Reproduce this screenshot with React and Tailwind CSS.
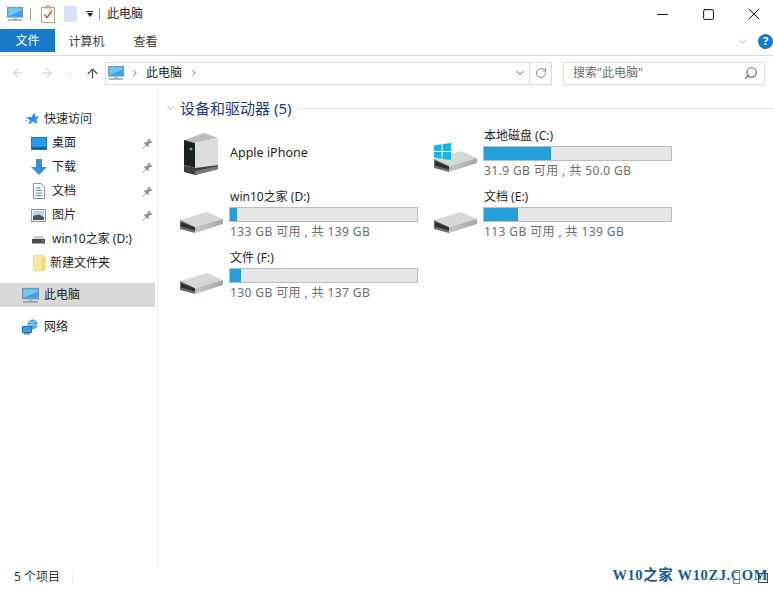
import { ArrowLeft, ArrowRight, ArrowUp, ChevronDown, ChevronRight, RotateCw, Search, Minus, Square, X } from "lucide-react";

const uiFont = { fontFamily: '"Noto Sans", "Noto Sans CJK SC", sans-serif' };

function PcIcon({ size = 18 }) {
  return (
    <svg width={size} height={size} viewBox="0 0 18 18">
      <rect x="0.5" y="1.5" width="17" height="11" fill="#3fa9ea" stroke="#7a8fa0" />
      <rect x="1.5" y="2.5" width="15" height="9" fill="#6cc8f5" />
      <path d="M1.5 11.5 L16.5 11.5 L16.5 5 Z" fill="#3d9fe0" />
      <rect x="7" y="13" width="4" height="2" fill="#b0b8be" />
      <rect x="1" y="15" width="16" height="1.5" fill="#8d979f" />
    </svg>
  );
}

function PinIcon() {
  return (
    <svg width="11" height="11" viewBox="0 0 11 11">
      <path d="M6.5 0.5 L10.5 4.5 L9.2 5.2 L8.4 4.8 L6.4 7 L6.4 9 L5.6 9.2 L1.8 5.4 L2.2 4.6 L4.2 4.6 L6.2 2.6 L5.8 1.6 Z" fill="#8f979e" />
      <path d="M3.4 7.6 L0.6 10.4" stroke="#8f979e" strokeWidth="1" />
    </svg>
  );
}

function DriveIcon() {
  return (
    <svg width="43" height="21" viewBox="0 0 43 21">
      <defs>
        <linearGradient id="driveSide" x1="0" y1="0" x2="1" y2="0">
          <stop offset="0" stopColor="#c8c9ca" />
          <stop offset="1" stopColor="#a4a6a7" />
        </linearGradient>
      </defs>
      <path d="M0 8 L27 0 L43 7 L15 15 Z" fill="#d6d7d8" />
      <path d="M15 15 L43 7 L43 12 L15 21 Z" fill="url(#driveSide)" />
      <path d="M0 8 L15 15 L15 21 L0 17 Z" fill="#6a6e6f" />
      <path d="M1 10 L15 15.5 L15 18.5 L1 14.5 Z" fill="#2c2f30" />
      <rect x="15.5" y="16.5" width="2" height="1.5" fill="#5fd06a" />
    </svg>
  );
}

function WinLogo() {
  return (
    <svg width="17" height="17" viewBox="0 0 17 17" className="absolute left-0 top-[13px]">
      <path d="M0 2.4 L7.6 1.2 L7.6 8 L0 8 Z M8.6 1 L17 0 L17 8 L8.6 8 Z M0 9 L7.6 9 L7.6 15.8 L0 14.6 Z M8.6 9 L17 9 L17 17 L8.6 16 Z" fill="#12b5e8" />
    </svg>
  );
}

function ServerIcon() {
  return (
    <svg width="34" height="42" viewBox="0 0 34 42">
      <path d="M0 7 L20 0 L34 5 L11 10 Z" fill="#bcbdbf" />
      <path d="M11 10 L34 5 L34 32 L11 35 Z" fill="#dcdcdd" />
      <path d="M0 7 L11 10 L11 35 L0 32 Z" fill="#1d2022" />
      <path d="M0 32 L11 35 L34 32 L34 36 L11 42 L0 39 Z" fill="#3d4042" />
      <path d="M11 38 L34 33 L34 36 L11 42 Z" fill="#77797b" />
      <circle cx="7" cy="16" r="1.5" fill="#45c95a" />
    </svg>
  );
}

function DesktopIcon() {
  return (
    <svg width="16" height="13" viewBox="0 0 16 13">
      <rect x="0.5" y="0.5" width="15" height="12" fill="#2a9be8" stroke="#1c78bd" />
      <rect x="1" y="10" width="14" height="2" fill="#155f96" />
    </svg>
  );
}

function DownloadIcon() {
  return (
    <svg width="16" height="16" viewBox="0 0 16 16">
      <path d="M5 0 H11 V8 H16 L8 16 L0 8 H5 Z" fill="#3c8ee0" />
    </svg>
  );
}

function DocIcon() {
  return (
    <svg width="12" height="16" viewBox="0 0 12 16">
      <path d="M0.5 0.5 H8 L11.5 4 V15.5 H0.5 Z" fill="#fff" stroke="#8c949b" />
      <path d="M3 5 H7 M3 7.5 H9 M3 10 H9 M3 12.5 H9" stroke="#4d8ec4" strokeWidth="1" />
    </svg>
  );
}

function PictureIcon() {
  return (
    <svg width="15" height="13" viewBox="0 0 15 13">
      <rect x="0.5" y="0.5" width="14" height="12" fill="#eef1f3" stroke="#8c949b" />
      <rect x="2" y="2" width="11" height="5" fill="#b5d5ea" />
      <path d="M2 7 L8 5.5 L13 8 L13 11 L2 11 Z" fill="#47575f" />
    </svg>
  );
}

function SmallDriveIcon() {
  return (
    <svg width="15" height="9" viewBox="0 0 15 9">
      <path d="M1 4 L4 1 L12 1 L14 4 Z" fill="#d0d1d2" />
      <rect x="1" y="4" width="13" height="4.5" fill="#4a4d4f" />
      <rect x="11" y="5.5" width="1.5" height="1" fill="#6bd873" />
    </svg>
  );
}

function FolderIcon() {
  return (
    <svg width="13" height="16" viewBox="0 0 13 16">
      <path d="M0.5 1.5 Q0.5 0.5 1.5 0.5 H9 L9 15.5 H1.5 Q0.5 15.5 0.5 14.5 Z" fill="#ffe9a0" stroke="#efd58a" />
      <rect x="9" y="1.5" width="3.5" height="14" fill="#f6d677" />
    </svg>
  );
}

function StarIcon() {
  return (
    <svg width="15" height="14" viewBox="0 0 15 14">
      <path d="M9 0.5 L10.5 4.5 L14.5 4.8 L11.4 7.5 L12.4 12 L8 9.6 L3.6 13 L4.8 8.2 L1.5 5.2 L6.5 5 Z" fill="#2f8fe0" />
      <path d="M0 6 H3 M0 8.5 H2" stroke="#7fbdf0" strokeWidth="1" />
    </svg>
  );
}

function NetworkIcon() {
  return (
    <svg width="17" height="16" viewBox="0 0 17 16">
      <circle cx="10.5" cy="5.5" r="5" fill="#4aa3e0" />
      <path d="M7 3 Q10 5 13 2 M6 6 H15" stroke="#bfe4f8" strokeWidth="1" fill="none" />
      <rect x="0.5" y="7.5" width="9" height="6" fill="#3aa0e6" stroke="#1c78bd" />
      <rect x="2" y="14" width="6" height="1.5" fill="#7c8a94" />
    </svg>
  );
}

function TaskIcon() {
  return (
    <svg width="14" height="18" viewBox="0 0 14 18">
      <path d="M0.5 2.5 H13.5 V17.5 H0.5 Z" fill="#fff" stroke="#b5a48a" />
      <rect x="4" y="0.5" width="6" height="3" fill="#c9b28c" />
      <path d="M3.5 9.5 L6 12.5 L11 5.5" fill="none" stroke="#d9552c" strokeWidth="1.4" />
    </svg>
  );
}

function NavRow({ icon, label, pinned, indent = "pl-[31px]", active }) {
  return (
    <div className={`flex h-6 items-center ${indent} ${active ? "bg-[#d9d9d9]" : ""}`}>
      <span className="flex shrink-0 items-center">{icon}</span>
      <span className="flex-1 whitespace-nowrap text-[12px] text-[#1f1f1f]">{label}</span>
      {pinned && (
        <span className="mr-[2px] flex w-[11px]">
          <PinIcon />
        </span>
      )}
    </div>
  );
}

function DriveTile({ name, percent, info, logo }) {
  return (
    <div className="flex items-center">
      <div className="relative flex h-[48px] w-[49px] shrink-0 items-end pb-[6px]">
        <DriveIcon />
        {logo && <WinLogo />}
      </div>
      <div className="w-[189px]">
        <div className="h-[17px] -translate-y-px pl-px text-[12px] leading-[17px] text-[#1f1f1f]">{name}</div>
        <div className="mt-[1px] h-[15px] border border-[#bcbcbc] bg-[#e6e6e6]">
          <div className="h-full bg-[#26a0da]" style={{ width: `${percent}%` }} />
        </div>
        <div className="mt-[1px] h-[17px] pl-px text-[12px] leading-[17px] tracking-[0.4px] text-[#6d6d6d]">{info}</div>
      </div>
    </div>
  );
}

export default function App() {
  return (
    <div className="relative flex h-[589px] w-[773px] flex-col overflow-hidden bg-white" style={uiFont}>
      {/* title bar */}
      <div className="flex h-[28px] items-center">
        <div className="ml-[7px] flex items-center">
          <PcIcon size={16} />
          <span className="ml-[7px] h-[12px] w-px bg-[#9a9a9a]" />
          <span className="ml-[10px] flex"><TaskIcon /></span>
          <span className="ml-[9px] h-[16px] w-[13px] bg-[#d9e3f3]" />
          <span className="ml-[9px] flex flex-col items-center">
            <span className="mb-[1px] h-px w-[7px] bg-[#222]" />
            <span className="h-0 w-0 border-x-[3.5px] border-t-[4px] border-x-transparent border-t-[#222]" />
          </span>
          <span className="ml-[6px] h-[12px] w-px bg-[#9a9a9a]" />
          <span className="ml-[7px] text-[12px] text-[#1f1f1f]">此电脑</span>
        </div>
        <div className="-mr-1 ml-auto flex items-center text-[#111]">
          <span className="flex w-[46px] justify-center"><Minus size={17} strokeWidth={1} absoluteStrokeWidth /></span>
          <span className="flex w-[46px] justify-center"><Square size={13} strokeWidth={1} absoluteStrokeWidth /></span>
          <span className="flex w-[46px] justify-center"><X size={20} strokeWidth={1} absoluteStrokeWidth /></span>
        </div>
      </div>

      {/* ribbon tabs */}
      <div className="flex h-[28px] border-b border-[#dadada] pb-[3px] pt-px">
        <div className="flex w-[55px] items-center justify-center bg-[#1979ca] pt-px text-[12px] text-white">文件</div>
        <div className="flex w-[63px] items-center justify-center pt-[2px] text-[12px] text-[#3c3c3c]">计算机</div>
        <div className="flex w-[54px] items-center justify-center pl-[1px] pt-[2px] text-[12px] text-[#3c3c3c]">查看</div>
        <div className="ml-auto flex translate-y-[1px] items-center">
          <ChevronDown size={13} color="#a9b2bb" strokeWidth={1.5} />
          <span className="ml-[9px] flex h-[15px] w-[15px] items-center justify-center rounded-full bg-[#1979ca] text-[11px] font-bold text-white">?</span>
        </div>
      </div>

      {/* nav bar */}
      <div className="flex h-[33px] items-center pt-[5px] pb-[4px]">
        <div className="ml-[11px] flex items-center text-[#c9c9c9]">
          <ArrowLeft size={14} strokeWidth={1.75} />
          <ArrowRight size={14} strokeWidth={1.75} className="ml-[15px]" />
          <ChevronDown size={9} strokeWidth={1.5} className="ml-[11px]" />
          <ArrowUp size={15} strokeWidth={2} color="#4f4f4f" className="ml-[11px]" />
        </div>
        <div className="ml-[5px] flex h-[23px] w-[425px] items-center border border-[#d9d9d9]">
          <span className="ml-[2px]"><PcIcon size={16} /></span>
          <ChevronRight size={10} color="#555" className="ml-[6px]" />
          <span className="ml-[6px] text-[12px] text-[#1f1f1f]">此电脑</span>
          <ChevronRight size={10} color="#555" className="ml-[7px]" />
          <ChevronDown size={12} color="#555" className="ml-auto mr-[3px]" />
        </div>
        <div className="flex h-[23px] w-[22px] items-center justify-center border border-l-0 border-[#d9d9d9]">
          <RotateCw size={12} color="#666" strokeWidth={1.5} />
        </div>
        <div className="ml-[11px] flex h-[23px] w-[202px] items-center justify-between border border-[#d9d9d9] pl-[9px] pr-[6px]">
          <span className="text-[12px] text-[#6d6d6d]">搜索"此电脑"</span>
          <Search size={14} color="#666" strokeWidth={2} className="-scale-x-100" />
        </div>
      </div>

      {/* body */}
      <div className="flex min-h-0 flex-1">
        <div className="w-[158px] shrink-0 border-r border-[#f0f0f0] pr-[2px] pt-[18px]">
          <NavRow indent="pl-[25px]" label={<span className="ml-[4px]">快速访问</span>} icon={<StarIcon />} />
          <NavRow label={<span className="ml-[5px]">桌面</span>} pinned icon={<DesktopIcon />} />
          <NavRow label={<span className="ml-[5px]">下载</span>} pinned icon={<DownloadIcon />} />
          <NavRow label={<span className="ml-[5px]">文档</span>} pinned icon={<span className="ml-[2px] mr-[2px] flex"><DocIcon /></span>} />
          <NavRow label={<span className="ml-[6px]">图片</span>} pinned icon={<PictureIcon />} />
          <NavRow label={<span className="ml-[6px]">win10之家 (D:)</span>} icon={<SmallDriveIcon />} />
          <NavRow label={<span className="ml-[4px]">新建文件夹</span>} icon={<span className="ml-[2px] flex"><FolderIcon /></span>} />
          <div className="h-[8px]" />
          <NavRow indent="pl-[22px]" label={<span className="ml-[5px]">此电脑</span>} active icon={<PcIcon size={17} />} />
          <div className="h-[8px]" />
          <NavRow indent="pl-[22px]" label={<span className="ml-[5px]">网络</span>} icon={<NetworkIcon />} />
        </div>

        <div className="min-w-0 flex-1 pt-[7px]">
          <div className="flex h-[24px] items-center pl-[7px]">
            <ChevronDown size={12} color="#7b8790" strokeWidth={1.25} />
            <span className="ml-[3px] whitespace-nowrap text-[15px] text-[#1e3a8a]">设备和驱动器 (5)</span>
            <span className="ml-[7px] h-px flex-1 bg-[#e4e6ea]" />
          </div>
          <div className="mt-[3px] grid grid-cols-[254px_254px] auto-rows-[61px] pl-[22px]">
            <div className="flex items-center">
              <div className="flex w-[50px] justify-start pl-[4px]"><ServerIcon /></div>
              <span className="text-[12.5px] text-[#1f1f1f]">Apple iPhone</span>
            </div>
            <DriveTile name="本地磁盘 (C:)" percent={36} info="31.9 GB 可用 , 共 50.0 GB" logo />
            <DriveTile name="win10之家 (D:)" percent={4} info="133 GB 可用 , 共 139 GB" />
            <DriveTile name="文档 (E:)" percent={18} info="113 GB 可用 , 共 139 GB" />
            <DriveTile name="文件 (F:)" percent={6} info="130 GB 可用 , 共 137 GB" />
          </div>
        </div>
      </div>

      {/* status bar */}
      <div className="flex h-[22px] items-center pb-[2px] pl-[14px]">
        <span className="text-[12px] text-[#333]">5 个项目</span>
        <span className="ml-[12px] h-[14px] w-px bg-[#f0f0f0]" />
      </div>

      {/* watermark lying over the status bar */}
      <div
        className="absolute bottom-[2px] right-[5px] whitespace-nowrap text-[14.5px] font-bold tracking-[0.6px] text-[#1a5a9e]"
        style={{ fontFamily: '"Liberation Serif", "Noto Sans CJK SC", serif' }}
      >
        W10之家 W10ZJ.COM
      </div>
      <span className="absolute bottom-[5px] right-[33px] h-[12px] w-[7px] border border-[#888]" />
      <span className="absolute bottom-[6px] right-[5px] h-[10px] w-[10px] border border-[#445]" />
    </div>
  );
}
